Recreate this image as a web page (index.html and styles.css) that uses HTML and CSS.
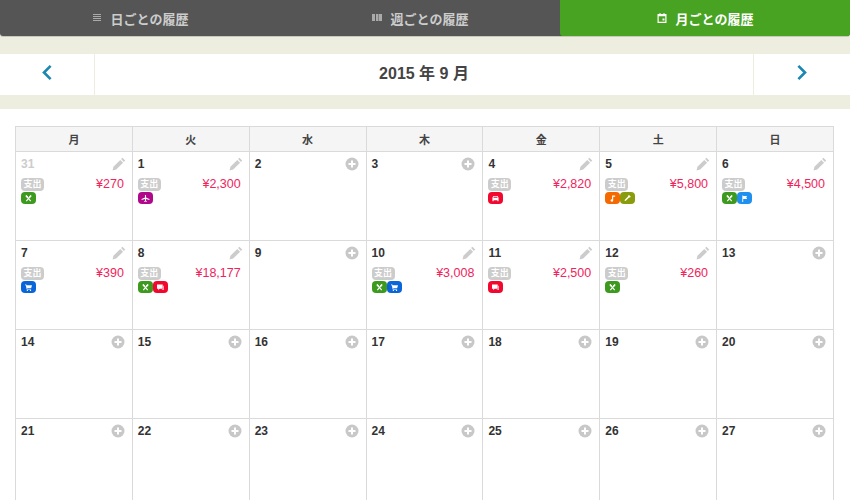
FILE: index.html
```html
<!DOCTYPE html>
<html lang="ja">
<head>
  <meta charset="UTF-8" />
  <title>月ごとの履歴</title>
  <link rel="stylesheet" href="styles.css">
</head>
<body>
  <svg class="defs" width="0" height="0">
    <symbol id="i-pen" viewBox="0 0 14 14"><path d="M10.4 0.8l2.8 2.8-1.3 1.3-2.8-2.8zM8.300 2.900l2.800 2.800-6.900 6.900-3.600 0.800 0.800-3.600z"/></symbol>
    <symbol id="i-plus" viewBox="0 0 14 14"><circle cx="7" cy="7" r="6.500"/><path fill="#fff" d="M6 3.500h2V6h2.500v2H8v2.500H6V8H3.500V6H6z"/></symbol>
    <symbol id="i-food" viewBox="0 0 10 8"><path d="M2.500 1L7.500 7M7.500 1L2.500 7" stroke="#fff" stroke-width="1.300"/><path d="M2 .500L3.800 2.600M8 .500L6.200 2.600" stroke="#fff" stroke-width="1.800"/></symbol>
    <symbol id="i-plane" viewBox="0 0 10 8"><path fill="#fff" d="M4.400 0h1.200v2.800L9.500 4.600v1L5.600 4.600v1.900l1 .9V8L5 7.500 3.400 8v-.6l1-.9V4.600L.5 5.600v-1l3.900-1.800z"/></symbol>
    <symbol id="i-car" viewBox="0 0 10 8"><path fill="#fff" d="M2.500 1h5l1 2.200V7H7.200V6H2.800v1H1.500V3.200zM3 1.900L2.500 3.200h5L7 1.900z"/></symbol>
    <symbol id="i-note" viewBox="0 0 10 8"><path fill="#fff" d="M4.500 0.500H8v1.600H5.800v4.100a1.500 1.400 0 1 1-1.300-1.400z"/></symbol>
    <symbol id="i-tool" viewBox="0 0 10 8"><path fill="#fff" d="M7.200 0.300l1.600 1.600-1 1-1-.1-3.400 3.500-1.200.6-.6-.6.6-1.200L5.600 1.700l-.1-1z"/></symbol>
    <symbol id="i-flag" viewBox="0 0 10 8"><path fill="#fff" d="M2.500 0.500h1v.5h4.500L7 2.700 8 4.500H3.500V8h-1z"/></symbol>
    <symbol id="i-cart" viewBox="0 0 10 8"><path fill="#fff" d="M1 0.500h1.500l.3 1H9L8 4.800H3.500l.2.800H8v.8H3L1.900 1.300H1z"/><circle cx="3.700" cy="7.300" r=".7" fill="#fff"/><circle cx="7.300" cy="7.300" r=".7" fill="#fff"/></symbol>
    <symbol id="i-chat" viewBox="0 0 10 8"><path fill="#fff" d="M1 0.500h6.500v5H4L2.500 7V5.500H1z"/><path fill="#fff" d="M8.300 2H9v4.500H6.500V6h1.800z"/></symbol>
  </svg>

  <div class="tabs">
    <a class="tab">
      <svg class="tab-icon" viewBox="0 0 10 10"><path d="M1 1h8v1H1zM1 3h8v1H1zM1 5h8v1H1zM1 7h8v1H1z"/></svg>
      日ごとの履歴
    </a>
    <a class="tab">
      <svg class="tab-icon" viewBox="0 0 10 10"><path d="M0 1h3v7H0zM4 1h2.500v7H4zM7 1h3v7H7z"/></svg>
      週ごとの履歴
    </a>
    <a class="tab active">
      <svg class="tab-icon" viewBox="0 0 10 10"><path fill-rule="evenodd" d="M2.500 0h1v1h3V0h1v1H9.500v9H.5V1h2zM1.700 3.200v5.600h6.600V3.200z"/><path d="M5.500 5.500h2v2h-2z"/></svg>
      月ごとの履歴
    </a>
  </div>

  <div class="month-band">
    <div class="month-nav">
      <a class="month-arrow">
        <svg viewBox="0 0 10 14"><path d="M8 1.500L2.500 7 8 12.500"/></svg>
      </a>
      <div class="month-title">2015 年 9 月</div>
      <a class="month-arrow right">
        <svg viewBox="0 0 10 14"><path d="M2 1.500L7.500 7 2 12.500"/></svg>
      </a>
    </div>
  </div>

  <table class="calendar">
    <thead>
      <tr><th>月</th><th>火</th><th>水</th><th>木</th><th>金</th><th>土</th><th>日</th></tr>
    </thead>
    <tbody>
      <tr>
        <td>
          <div class="day-head"><span class="day muted">31</span><svg class="act pen"><use href="#i-pen"/></svg></div>
          <div class="spend"><span class="tag">支出</span><span class="yen">¥270</span></div>
          <div class="cats"><span class="cat green"><svg><use href="#i-food"/></svg></span></div>
        </td>
        <td>
          <div class="day-head"><span class="day">1</span><svg class="act pen"><use href="#i-pen"/></svg></div>
          <div class="spend"><span class="tag">支出</span><span class="yen">¥2,300</span></div>
          <div class="cats"><span class="cat purple"><svg><use href="#i-plane"/></svg></span></div>
        </td>
        <td><div class="day-head"><span class="day">2</span><svg class="act plus"><use href="#i-plus"/></svg></div></td>
        <td><div class="day-head"><span class="day">3</span><svg class="act plus"><use href="#i-plus"/></svg></div></td>
        <td>
          <div class="day-head"><span class="day">4</span><svg class="act pen"><use href="#i-pen"/></svg></div>
          <div class="spend"><span class="tag">支出</span><span class="yen">¥2,820</span></div>
          <div class="cats"><span class="cat red"><svg><use href="#i-car"/></svg></span></div>
        </td>
        <td>
          <div class="day-head"><span class="day">5</span><svg class="act pen"><use href="#i-pen"/></svg></div>
          <div class="spend"><span class="tag">支出</span><span class="yen">¥5,800</span></div>
          <div class="cats"><span class="cat orange"><svg><use href="#i-note"/></svg></span><span class="cat olive"><svg><use href="#i-tool"/></svg></span></div>
        </td>
        <td>
          <div class="day-head"><span class="day">6</span><svg class="act pen"><use href="#i-pen"/></svg></div>
          <div class="spend"><span class="tag">支出</span><span class="yen">¥4,500</span></div>
          <div class="cats"><span class="cat green"><svg><use href="#i-food"/></svg></span><span class="cat sky"><svg><use href="#i-flag"/></svg></span></div>
        </td>
      </tr>
      <tr>
        <td>
          <div class="day-head"><span class="day">7</span><svg class="act pen"><use href="#i-pen"/></svg></div>
          <div class="spend"><span class="tag">支出</span><span class="yen">¥390</span></div>
          <div class="cats"><span class="cat blue"><svg><use href="#i-cart"/></svg></span></div>
        </td>
        <td>
          <div class="day-head"><span class="day">8</span><svg class="act pen"><use href="#i-pen"/></svg></div>
          <div class="spend"><span class="tag">支出</span><span class="yen">¥18,177</span></div>
          <div class="cats"><span class="cat green"><svg><use href="#i-food"/></svg></span><span class="cat red"><svg><use href="#i-chat"/></svg></span></div>
        </td>
        <td><div class="day-head"><span class="day">9</span><svg class="act plus"><use href="#i-plus"/></svg></div></td>
        <td>
          <div class="day-head"><span class="day">10</span><svg class="act pen"><use href="#i-pen"/></svg></div>
          <div class="spend"><span class="tag">支出</span><span class="yen">¥3,008</span></div>
          <div class="cats"><span class="cat green"><svg><use href="#i-food"/></svg></span><span class="cat blue"><svg><use href="#i-cart"/></svg></span></div>
        </td>
        <td>
          <div class="day-head"><span class="day">11</span><svg class="act pen"><use href="#i-pen"/></svg></div>
          <div class="spend"><span class="tag">支出</span><span class="yen">¥2,500</span></div>
          <div class="cats"><span class="cat red"><svg><use href="#i-chat"/></svg></span></div>
        </td>
        <td>
          <div class="day-head"><span class="day">12</span><svg class="act pen"><use href="#i-pen"/></svg></div>
          <div class="spend"><span class="tag">支出</span><span class="yen">¥260</span></div>
          <div class="cats"><span class="cat green"><svg><use href="#i-food"/></svg></span></div>
        </td>
        <td><div class="day-head"><span class="day">13</span><svg class="act plus"><use href="#i-plus"/></svg></div></td>
      </tr>
      <tr>
        <td><div class="day-head"><span class="day">14</span><svg class="act plus"><use href="#i-plus"/></svg></div></td>
        <td><div class="day-head"><span class="day">15</span><svg class="act plus"><use href="#i-plus"/></svg></div></td>
        <td><div class="day-head"><span class="day">16</span><svg class="act plus"><use href="#i-plus"/></svg></div></td>
        <td><div class="day-head"><span class="day">17</span><svg class="act plus"><use href="#i-plus"/></svg></div></td>
        <td><div class="day-head"><span class="day">18</span><svg class="act plus"><use href="#i-plus"/></svg></div></td>
        <td><div class="day-head"><span class="day">19</span><svg class="act plus"><use href="#i-plus"/></svg></div></td>
        <td><div class="day-head"><span class="day">20</span><svg class="act plus"><use href="#i-plus"/></svg></div></td>
      </tr>
      <tr>
        <td><div class="day-head"><span class="day">21</span><svg class="act plus"><use href="#i-plus"/></svg></div></td>
        <td><div class="day-head"><span class="day">22</span><svg class="act plus"><use href="#i-plus"/></svg></div></td>
        <td><div class="day-head"><span class="day">23</span><svg class="act plus"><use href="#i-plus"/></svg></div></td>
        <td><div class="day-head"><span class="day">24</span><svg class="act plus"><use href="#i-plus"/></svg></div></td>
        <td><div class="day-head"><span class="day">25</span><svg class="act plus"><use href="#i-plus"/></svg></div></td>
        <td><div class="day-head"><span class="day">26</span><svg class="act plus"><use href="#i-plus"/></svg></div></td>
        <td><div class="day-head"><span class="day">27</span><svg class="act plus"><use href="#i-plus"/></svg></div></td>
      </tr>
    </tbody>
  </table>
</body>
</html>
```

FILE: styles.css
```css
html, body {
  height: 500px;
  overflow: hidden;
}
body {
  margin: 0;
  background: #fff;
  color: #333;
  font-family: "Liberation Sans", "Noto Sans CJK JP", sans-serif;
}
.defs {
  position: absolute;
}
.tabs {
  display: grid;
  grid-template-columns: 280px 280px 290px;
  height: 36px;
  background: #555;
  border-radius: 0 0 3px 3px;
  box-shadow: 0 1px 0 #c9c9bb;
  position: relative;
}
.tab {
  display: flex;
  align-items: center;
  justify-content: center;
  gap: 9px;
  color: #ccc;
  font-size: 13px;
  font-weight: 700;
  border-radius: 0 0 3px 3px;
}
.tab.active {
  background: #48a322;
  color: #fff;
}
.tab .tab-icon {
  width: 10px;
  height: 10px;
  fill: #aaa;
}
.tab.active .tab-icon {
  fill: #fff;
}
.month-band {
  background: #eeeee0;
  padding: 18px 0 14px;
}
.month-nav {
  display: flex;
  height: 41px;
  background: #fff;
}
.month-arrow {
  width: 94px;
  display: flex;
  align-items: center;
  justify-content: center;
  padding-bottom: 4px;
  border-right: 1px solid #eeeee0;
}
.month-arrow.right {
  width: 96px;
  border-right: 0;
  border-left: 1px solid #eeeee0;
}
.month-arrow svg {
  width: 12px;
  height: 17px;
  fill: none;
  stroke: #1c87b0;
  stroke-width: 2.2;
}
.month-title {
  flex: 1;
  text-align: center;
  font-size: 16px;
  font-weight: 700;
  line-height: 40px;
  color: #444;
}
.calendar {
  margin: 17px 0 0 15px;
  width: 819px;
  border-collapse: collapse;
  table-layout: fixed;
}
.calendar th, .calendar td {
  border: 1px solid #dadada;
}
.calendar th {
  height: 24px;
  padding: 0;
  background: #f5f5f5;
  font-size: 11px;
  font-weight: 700;
  color: #444;
}
.calendar td {
  height: 88px;
  padding: 0 7px 0 5px;
  vertical-align: top;
}
.day-head {
  display: flex;
  justify-content: space-between;
  align-items: center;
  height: 14px;
  margin-top: 5px;
}
.day {
  font-size: 12px;
  font-weight: 700;
  color: #333;
}
.day.muted {
  color: #ccc;
}
.act {
  width: 14px;
  height: 14px;
}
.pen {
  fill: #ccc;
  margin-right: -1px;
}
.plus {
  fill: #c8c8c8;
}
.spend {
  display: flex;
  justify-content: space-between;
  align-items: center;
  margin-top: 6px;
  height: 14px;
}
.tag {
  width: 23px;
  height: 13px;
  background: #ccc;
  border-radius: 4px;
  color: #fff;
  font-size: 9px;
  font-weight: 700;
  line-height: 13px;
  text-align: center;
}
.yen {
  color: #f0245c;
  font-size: 12.5px;
  margin-right: 1px;
}
.cats {
  display: flex;
  margin-top: 1px;
}
.cat {
  width: 15px;
  height: 12px;
  border-radius: 4px;
  display: flex;
  align-items: center;
  justify-content: center;
}
.cat svg {
  width: 9px;
  height: 7px;
}
.green { background: #3d9a1e; }
.purple { background: #b0088a; }
.red { background: #f2082f; }
.orange { background: #f56a00; }
.olive { background: #8a9c0c; }
.sky { background: #1f8ff0; }
.blue { background: #0a66d8; }
```
